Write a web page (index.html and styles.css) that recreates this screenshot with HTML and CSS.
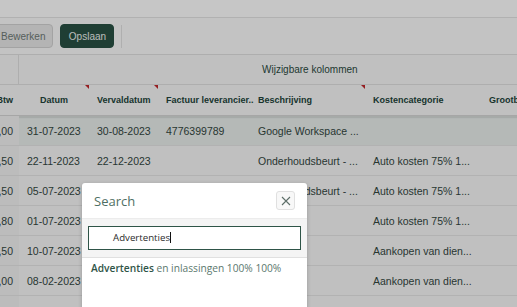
FILE: index.html
```html
<!DOCTYPE html>
<html lang="en">
<head>
    <meta charset="UTF-8">
    <meta name="viewport" content="width=device-width, initial-scale=1.0">
    <title>Uitgaven</title>
    <link rel="stylesheet" href="styles.css">
</head>
<body>
    <div class="page">
        <div class="topbar"></div>
        <div class="toolbar">
            <button class="btn btn-light">Bewerken</button>
            <button class="btn btn-dark">Opslaan</button>
            <span class="toolbar-sep"></span>
        </div>
        <div class="grid">
            <div class="group-row">
                <div class="group-cell first"></div>
                <div class="group-cell title">Wijzigbare kolommen</div>
            </div>
            <div class="row head">
                <div class="cell num">Btw</div>
                <div class="cell center flag">Datum</div>
                <div class="cell flag">Vervaldatum</div>
                <div class="cell">Factuur leverancier..</div>
                <div class="cell flag">Beschrijving</div>
                <div class="cell">Kostencategorie</div>
                <div class="cell">Grootboek</div>
            </div>
            <div class="row selected">
                <div class="cell num">21,00</div>
                <div class="cell">31-07-2023</div>
                <div class="cell">30-08-2023</div>
                <div class="cell">4776399789</div>
                <div class="cell">Google Workspace ...</div>
                <div class="cell"></div>
                <div class="cell"></div>
            </div>
            <div class="row">
                <div class="cell num">10,50</div>
                <div class="cell">22-11-2023</div>
                <div class="cell">22-12-2023</div>
                <div class="cell"></div>
                <div class="cell">Onderhoudsbeurt - ...</div>
                <div class="cell">Auto kosten 75% 1...</div>
                <div class="cell"></div>
            </div>
            <div class="row">
                <div class="cell num">10,50</div>
                <div class="cell">05-07-2023</div>
                <div class="cell">05-08-2023</div>
                <div class="cell"></div>
                <div class="cell">Onderhoudsbeurt - ...</div>
                <div class="cell">Auto kosten 75% 1...</div>
                <div class="cell"></div>
            </div>
            <div class="row">
                <div class="cell num">16,80</div>
                <div class="cell">01-07-2023</div>
                <div class="cell">01-08-2023</div>
                <div class="cell"></div>
                <div class="cell">Reparatie</div>
                <div class="cell">Auto kosten 75% 1...</div>
                <div class="cell"></div>
            </div>
            <div class="row">
                <div class="cell num">10,50</div>
                <div class="cell">10-07-2023</div>
                <div class="cell">10-08-2023</div>
                <div class="cell"></div>
                <div class="cell">Opleiding</div>
                <div class="cell">Aankopen van dien...</div>
                <div class="cell"></div>
            </div>
            <div class="row">
                <div class="cell num">21,00</div>
                <div class="cell">08-02-2023</div>
                <div class="cell">08-03-2023</div>
                <div class="cell"></div>
                <div class="cell"></div>
                <div class="cell">Aankopen van dien...</div>
                <div class="cell"></div>
            </div>
            <div class="row">
                <div class="cell num">21,00</div>
                <div class="cell">14-02-2023</div>
                <div class="cell">14-03-2023</div>
                <div class="cell"></div>
                <div class="cell"></div>
                <div class="cell"></div>
                <div class="cell"></div>
            </div>
        </div>
    </div>

    <div class="backdrop"></div>

    <div class="modal">
        <div class="modal-header">
            <span class="modal-title">Search</span>
            <button class="modal-close" aria-label="Sluiten">
                <svg width="10" height="10" viewBox="0 0 10 10"><path d="M1 1L9 9M9 1L1 9" stroke="#5d6e68" stroke-width="1.1" fill="none"/></svg>
            </button>
        </div>
        <div class="modal-search">
            <div class="search-input">Advertenties<span class="caret"></span></div>
        </div>
        <div class="modal-results">
            <div class="result"><b>Advertenties</b> en inlassingen 100% 100%</div>
        </div>
    </div>
</body>
</html>
```

FILE: styles.css
```css
body {
    margin: 0;
    padding: 0;
    font-family: 'Liberation Sans', Arial, sans-serif;
    background-color: #ffffff;
    overflow: hidden;
    width: 517px;
    height: 307px;
}

.page {
    margin-left: -41px;
    width: 700px;
}

.topbar {
    height: 17px;
    border-bottom: 1px solid #e4e4e4;
}

.toolbar {
    display: flex;
    align-items: center;
    height: 36px;
    padding-left: 33px;
    gap: 7px;
    background-color: #fbfbfb;
    border-bottom: 1px solid #e0e0e0;
}

.btn {
    height: 24px;
    border-radius: 4px;
    font-family: 'Liberation Sans', Arial, sans-serif;
    font-size: 10px;
    cursor: pointer;
}

.btn-light {
    background-color: #e8e8e8;
    border: 1px solid #d2d2d2;
    color: #6f7a76;
    padding: 0 7px 0 8px;
}

.btn-dark {
    background-color: #285143;
    border: 1px solid #285143;
    color: #eef2f0;
    width: 54px;
    padding: 0;
}

.toolbar-sep {
    width: 1px;
    height: 23px;
    background-color: #e2e2e2;
}

.grid {
    background-color: #f8f8f8;
}

.group-row {
    display: flex;
    height: 29px;
    border-bottom: 1px solid #e0e0e0;
}

.group-cell.first {
    width: 60px;
    border-right: 1px solid #e0e0e0;
    box-sizing: border-box;
}

.group-cell.title {
    padding-left: 243px;
    font-size: 10px;
    color: #2b4a40;
    line-height: 29px;
}

.row {
    display: grid;
    grid-template-columns: 60px 70px 69px 92px 115px 116px 100px;
    height: 30px;
    border-bottom: 1px solid #e6e6e6;
    box-sizing: border-box;
    font-size: 10.5px;
    color: #33473f;
}

.row.head {
    font-weight: bold;
    font-size: 9px;
    color: #22433a;
    height: 31px;
    border-bottom: 1px solid #d6d6d6;
    box-shadow: 0 2px 1px rgba(0, 0, 0, 0.08);
    position: relative;
}

.row.selected {
    background-color: #e9eeec;
}

.cell {
    position: relative;
    padding-left: 8px;
    line-height: 30px;
    white-space: nowrap;
    overflow: hidden;
}

.row.head .cell {
    overflow: visible;
}

.cell.num {
    text-align: right;
    padding: 0 6px 0 0;
    background-color: #f2f2f2;
}

.row.head .cell.num {
    background-color: transparent;
}

.cell.center {
    text-align: center;
    padding: 0;
}

.cell.flag::after {
    content: "";
    position: absolute;
    top: 0;
    right: 0;
    border-top: 4px solid #c0272d;
    border-left: 4px solid transparent;
}

.backdrop {
    position: absolute;
    top: 0;
    left: 0;
    right: 0;
    bottom: 0;
    background-color: rgba(0, 0, 0, 0.225);
}

.modal {
    position: absolute;
    left: 82px;
    top: 183px;
    width: 225px;
    height: 140px;
    background-color: #ffffff;
    border-radius: 3px 3px 0 0;
    box-shadow: 0 1px 4px rgba(0, 0, 0, 0.2);
    font-family: 'Open Sans', sans-serif;
}

.modal-header {
    display: flex;
    align-items: center;
    justify-content: space-between;
    height: 35px;
    padding: 0 12px;
    border-bottom: 1px solid #ececec;
}

.modal-title {
    font-size: 13px;
    color: #4f6f64;
}

.modal-close {
    width: 19px;
    height: 19px;
    display: flex;
    align-items: center;
    justify-content: center;
    padding: 0;
    background-color: #f8f8f8;
    border: 1px solid #e0e0e0;
    border-radius: 3px;
}

.modal-search {
    background-color: #f4f4f4;
    padding: 7px 6px;
    border-bottom: 1px solid #e0e0e0;
}

.search-input {
    height: 22px;
    border: 1px solid #2e5447;
    background-color: #ffffff;
    padding-left: 24px;
    font-size: 9.7px;
    line-height: 22px;
    color: #2b2b2b;
}

.caret {
    display: inline-block;
    width: 1px;
    height: 11px;
    background-color: #111;
    vertical-align: -2px;
}

.modal-results {
    padding: 3px 9px;
}

.result {
    font-size: 10.2px;
    color: #5b786e;
}

.result b {
    font-weight: 600;
    color: #2f5447;
}
```
